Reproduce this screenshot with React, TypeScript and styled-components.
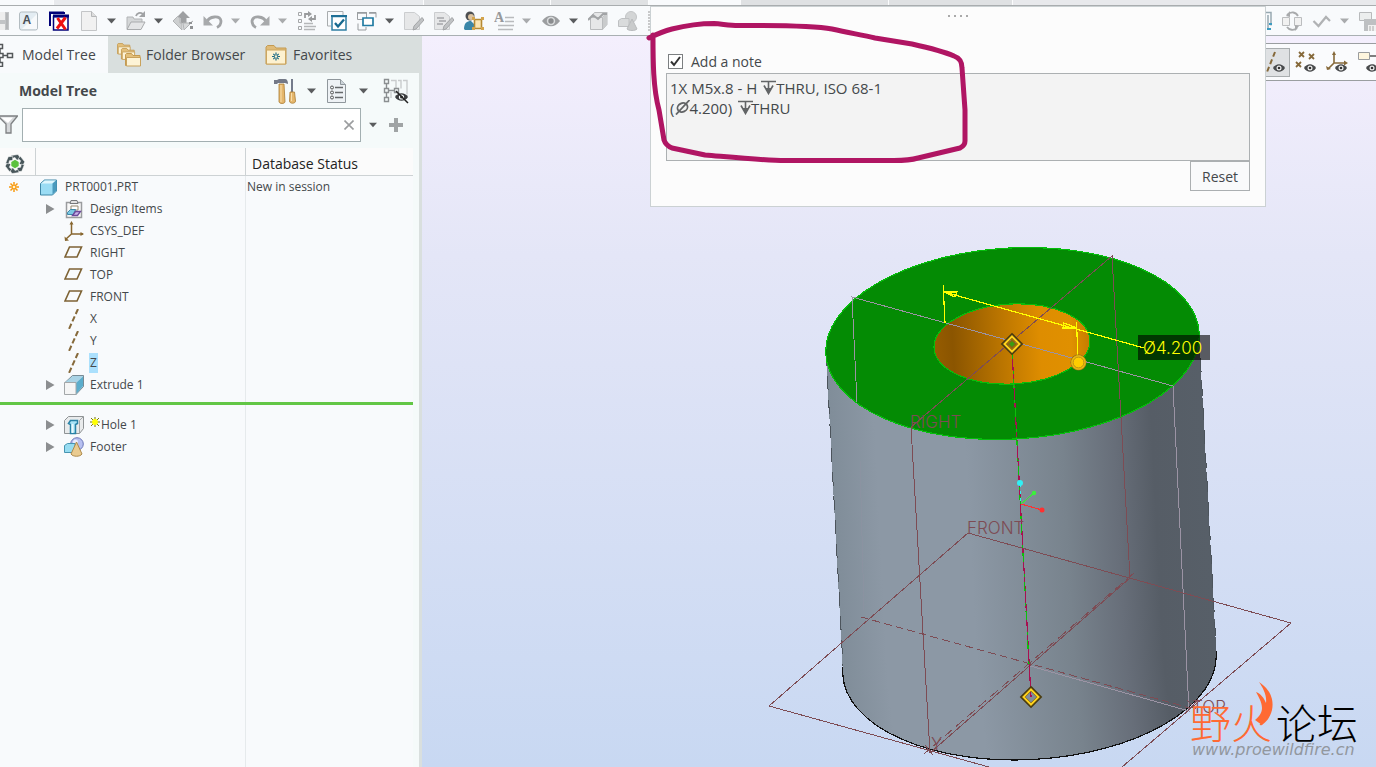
import React from "react";
import styled, { createGlobalStyle } from "styled-components";

const GlobalStyle = createGlobalStyle`
  * { box-sizing: border-box; }
  body { margin: 0; overflow: hidden; font-family: "Open Sans", "Noto Sans", sans-serif; color: #44484b; }
  button, input, textarea { font: inherit; color: inherit; }
`;

/* ---------- page frame ---------- */

const Page = styled.div`
  position: relative;
  display: flex;
  flex-direction: column;
  height: 100vh;
  min-height: 560px;
  overflow: hidden;
`;

const RibbonTabs = styled.div`
  display: flex;
  gap: 1px;
  height: 6px;
  background: #fbfcfd;
  border-bottom: 1px solid #a9adaf;
`;

const RibbonTab = styled.span<{ $w?: number; $tone: string }>`
  flex: ${(p) => (p.$w ? `0 0 ${p.$w}px` : "1")};
  background: ${(p) => p.$tone};
`;

const Toolbar = styled.header`
  display: flex;
  justify-content: space-between;
  align-items: center;
  height: 30px;
  overflow: hidden;
  background: #f8fafc;
  border-bottom: 1px solid #a9b0b2;
`;

const ToolGroup = styled.div<{ $start?: number; $end?: number }>`
  display: flex;
  align-items: center;
  gap: 10px;
  flex: none;
  margin-left: ${(p) => p.$start || 0}px;
  margin-right: ${(p) => p.$end || 0}px;
`;

const Split = styled.span`
  display: flex;
  align-items: center;
  gap: 8px;
`;

const IconButton = styled.button<{ $w?: number; $h?: number }>`
  display: flex;
  align-items: center;
  justify-content: center;
  width: ${(p) => p.$w || 20}px;
  height: ${(p) => p.$h || 20}px;
  padding: 0;
  border: 0;
  background: none;
  flex: none;
`;

const Work = styled.div`
  display: flex;
  flex: 1;
  min-height: 0;
`;

/* ---------- model tree panel ---------- */

const Panel = styled.aside`
  display: flex;
  flex-direction: column;
  width: 422px;
  flex: none;
  background: #d9dfde;
  padding-right: 3px;
`;

const PanelTabs = styled.nav`
  display: flex;
  height: 37px;
`;

const PanelTab = styled.button<{ $active?: boolean; $w: number }>`
  display: flex;
  align-items: center;
  gap: 5px;
  width: ${(p) => p.$w}px;
  padding: 0 0 0 9px;
  border: 0;
  background: ${(p) => (p.$active ? "#f8fafc" : "transparent")};
  font-size: 14px;
  white-space: nowrap;
  overflow: hidden;
`;

const LeadTab = styled(PanelTab)`
  padding-left: 0;
  gap: 8px;
`;

const PanelBody = styled.div`
  display: flex;
  flex-direction: column;
  flex: 1;
  background: #f5fafa;
`;

const PanelHead = styled.div`
  display: flex;
  align-items: center;
  height: 35px;
  padding: 0 10px 0 19px;
  gap: 15px;
`;

const PanelTitle = styled.h2`
  flex: 1;
  margin: 0;
  font-size: 14px;
  font-weight: 700;
`;

const SearchRow = styled.div`
  display: flex;
  align-items: center;
  height: 34px;
  gap: 8px;
  margin-bottom: 6px;
  padding-right: 12px;
`;

const SearchBox = styled.div`
  display: flex;
  align-items: center;
  flex: 1;
  height: 34px;
  margin-left: -4px;
  background: #fff;
  border: 1px solid #a3afb1;
`;

const SearchInput = styled.input`
  flex: 1;
  min-width: 0;
  border: 0;
  outline: 0;
  padding: 0 8px;
  background: transparent;
  font-size: 14px;
`;

const TreeArea = styled.div`
  flex: 1;
  margin-right: 6px;
  background: linear-gradient(#e6eaec, #e6eaec) 245px 0 / 1px 100% no-repeat #f8fafc;
`;

const Tree = styled.table`
  width: 100%;
  table-layout: fixed;
  border-collapse: separate;
  border-spacing: 0;
  font-size: 12px;

  td { height: 22px; padding: 0; line-height: 16px; white-space: nowrap; }
`;

const HeadCell = styled.th<{ $w?: number }>`
  width: ${(p) => (p.$w ? `${p.$w}px` : "auto")};
  height: 28px;
  padding: 4px 0 0 5px;
  background: #fbfbfb;
  border-bottom: 1px solid #cdd2d4;
  border-right: 1px solid #cdd2d4;
  color: #222;
  font-size: 14px;
  font-weight: 400;
  line-height: 20px;
  text-align: left;

  &:last-child { padding-left: 6px; border-right: 0; }
  svg { display: block; }
`;

const StatusCell = styled.td`
  padding-left: 1px !important;
`;

const MarkCell = styled.td`
  padding-left: 9px !important;
  svg { display: block; }
`;

const Node = styled.div<{ $root?: boolean }>`
  display: flex;
  align-items: center;
  gap: ${(p) => (p.$root ? 8 : 5)}px;
  height: 22px;
  padding-left: ${(p) => (p.$root ? 4 : 9)}px;
`;

const Twisty = styled.button`
  width: 10px;
  height: 12px;
  padding: 0;
  margin-right: 4px;
  border: 0;
  background: none;
  flex: none;
  svg { display: block; }
`;

const NoTwisty = styled.span`
  width: 10px;
  margin-right: 4px;
  flex: none;
`;

const NodeLabel = styled.span<{ $selected?: boolean }>`
  display: flex;
  padding: 2px 1px;
  background: ${(p) => (p.$selected ? "#abe0fd" : "transparent")};
`;

const InsertCell = styled.td`
  height: 18px !important;
  padding-top: 6px !important;
  line-height: 1px !important;
  vertical-align: top;
`;

const InsertLine = styled.div`
  height: 3px;
  background: #62c645;
`;

/* ---------- graphics area ---------- */

const Canvas = styled.main`
  position: relative;
  flex: 1;
  min-width: 0;
  background: linear-gradient(#f4effd, #e4e6f7 30%, #c8d8f2);
`;

const Scene = styled.svg`
  display: block;
  width: 100%;
  height: 100%;
`;

const ViewBar = styled.div`
  position: absolute;
  top: 7px;
  right: 0;
  display: flex;
  align-items: center;
  justify-content: flex-end;
  gap: 1px;
  width: 130px;
  height: 38px;
  overflow: hidden;
  background: #fafbfd;
  border-top: 1px solid #9a9ea0;
  border-bottom: 1px solid #9a9ea0;
`;

const ViewButton = styled(IconButton)<{ $on?: boolean }>`
  width: 30px;
  height: 29px;
  background: ${(p) => (p.$on ? "#dfe1e3" : "none")};
  border: 1px solid ${(p) => (p.$on ? "#a9adaf" : "transparent")};
  &:last-child { margin-right: -7px; }
`;

const Watermark = styled.div`
  position: absolute;
  right: 18px;
  bottom: 8px;
  width: 168px;
`;

const BrandName = styled.div`
  display: flex;
  justify-content: space-between;
  font-family: "Noto Sans CJK SC", sans-serif;
  font-size: 41px;
  font-weight: 300;
  line-height: 40px;
  color: #000;
  white-space: nowrap;
`;

const Orange = styled.span`
  color: #ff6a33;
`;

const Site = styled.div`
  padding-left: 2px;
  font-family: "DejaVu Sans", sans-serif;
  font-size: 16px;
  font-style: italic;
  line-height: 18px;
  color: #92979e;
`;

const Flame = styled.svg`
  position: absolute;
  left: 59px;
  top: -20px;
`;

/* ---------- note dialog ---------- */

const Dialog = styled.section`
  position: absolute;
  left: 650px;
  right: 110px;
  top: 6px;
  display: flex;
  flex-direction: column;
  padding: 8px 15px 15px;
  background: #fcfcfc;
  border: 1px solid #cbd1d3;
`;

const Grip = styled.div`
  display: flex;
  justify-content: center;
  gap: 4px;
  height: 34px;

  i { width: 2px; height: 2px; background: #aaa; }
`;

const CheckRow = styled.label`
  display: flex;
  align-items: center;
  gap: 8px;
  height: 24px;
  font-size: 14px;
`;

const Check = styled.input`
  appearance: none;
  width: 15px;
  height: 15px;
  margin: 0 0 0 2px;
  border: 1px solid #7c7f81;
  background: #fff;

  &:checked {
    background: #fff url("data:image/svg+xml,%3Csvg xmlns='http://www.w3.org/2000/svg' viewBox='0 0 13 13'%3E%3Cpath d='M2 6.5 5 10l6-8' fill='none' stroke='%23333' stroke-width='2'/%3E%3C/svg%3E");
  }
`;

const NoteBox = styled.div`
  position: relative;
`;

const NoteText = styled.textarea`
  display: block;
  width: 100%;
  height: 88px;
  padding: 4px 3px;
  border: 1px solid #acb0b2;
  outline: 0;
  resize: none;
  overflow: hidden;
  background: #f3f3f3;
  font-family: "Open Sans", "DejaVu Sans", sans-serif;
  font-size: 15px;
  line-height: 20px;
`;

const NoteSymbol = styled.svg<{ $x: number; $line: number }>`
  position: absolute;
  left: ${(p) => p.$x}px;
  top: ${(p) => 7 + p.$line * 20}px;
  pointer-events: none;
`;

const ResetButton = styled.button`
  align-self: flex-end;
  width: 60px;
  height: 30px;
  padding: 0;
  border: 1px solid #abafb1;
  background: #f9fafb;
  font-size: 14px;
`;

const Marker = styled.svg`
  position: absolute;
  left: 640px;
  top: 16px;
  pointer-events: none;
`;

/* ---------- toolbar drawings ---------- */

const Svg = ({ w = 20, h = 20, children }: { w?: number; h?: number; children: React.ReactNode }) => (
  <svg width={w} height={h} viewBox={`0 0 ${w} ${h}`} fill="none" aria-hidden="true">
    {children}
  </svg>
);

const Caret = ({ dim }: { dim?: boolean }) => (
  <Svg w={9} h={6}>
    <path d="M0 .5h9L4.500 5.500z" fill={dim ? "#a9abad" : "#5a5c5e"} />
  </Svg>
);

const SaveIcon = () => (
  <Svg>
    <path d="M1 1h19v18H1z" fill="#c2c4c6" />
    <path d="M4 1h12v8H4zM5 13h11v6H5z" fill="#eee" />
    <path d="M18 2v16" stroke="#a5a7a9" />
  </Svg>
);

const LetterIcon = () => (
  <Svg>
    <rect x=".5" y="1" width="18" height="18" rx="2" fill="#e3ecf2" stroke="#b3bcc1" />
    <path d="M3 18 18 3v15z" fill="#fff" opacity=".7" />
    <text x="3.500" y="12.500" fontSize="12" fontWeight="700" fontFamily="Liberation Sans, sans-serif" fill="#4a5157">A</text>
  </Svg>
);

const CloseWindowsIcon = () => (
  <Svg>
    <path d="M1 15V1.500h14M0 2h16" stroke="#000078" strokeWidth="2" />
    <path d="M4.500 5.500h14.500V19H4.500z" fill="#fff" stroke="#000078" strokeWidth="1.500" />
    <path d="M4 5h16" stroke="#000078" strokeWidth="3" />
    <path d="M8.500 7l8 11.500M16.500 6.500 8 17.500" stroke="#ee1111" strokeWidth="3" />
  </Svg>
);

const NewIcon = () => (
  <Svg>
    <path d="M2.500.5h10l5 5v14h-15z" fill="#f1f1f1" stroke="#c3c5c7" />
    <path d="M12.500.5v5h5" fill="#ddd" stroke="#b5b7b9" />
  </Svg>
);

const OpenIcon = () => (
  <Svg>
    <path d="M1 18V6h6l1 2h8v3" fill="#d5d7d8" stroke="#b2b4b6" />
    <path d="M1 18.500 5 11h14l-4 7.500z" fill="#e4e5e6" stroke="#a9abad" />
    <path d="M10 5c1-3 4-4 7-2" stroke="#a0a2a4" strokeWidth="1.800" />
    <path d="M19 0v6h-6z" fill="#a0a2a4" />
  </Svg>
);

const MoveIcon = () => (
  <Svg>
    <path d="M10 0l7 7h-3.500v5h-6V7H3z" fill="#9ea0a2" />
    <path d="M4.500 5.500 0 10l9 9v-7H7V7z" fill="#cdcfd0" stroke="#b2b4b6" />
    <path d="M10 12h7l3-2-9 9z" fill="#d6d8d9" stroke="#b2b4b6" />
    <path d="M16 11h3v2h-3zM17 15h3v3h-3z" fill="#8f9193" />
  </Svg>
);

const UndoIcon = ({ flip }: { flip?: boolean }) => (
  <Svg>
    <g transform={flip ? "matrix(-1 0 0 1 20 0)" : undefined}>
      <path d="M4 11c2-6 13-7 14-1 0 3-1 5-4 6.500" stroke="#a2a4a6" strokeWidth="2.800" />
      <path d="M.5 5v9.500H10z" fill="#a8aaac" />
    </g>
  </Svg>
);

const RegenIcon = () => (
  <Svg>
    <path d="M1.500 1.500h3v3h-3zM1.500 8.500h3v3h-3zM1.500 15.500h3v3h-3z" stroke="#a5a7a9" />
    <path d="M7 12.500h9M7 15.500h12M7 18.500h11" stroke="#b5b7b9" strokeWidth="1.500" />
    <path d="M8 7V3h4M18 4v4h-4" stroke="#999b9d" strokeWidth="1.800" />
    <path d="M11 0l4 3-4 3zM15 5v6l-4-3z" fill="#999b9d" />
  </Svg>
);

const CheckWindowIcon = () => (
  <Svg>
    <path d="M4 15H.5V.5H16V4" stroke="#a8acae" />
    <path d="M5 5.500h14V19H5z" fill="#fff" stroke="#2f7fa3" strokeWidth="1.500" />
    <path d="M4 5h16" stroke="#1d6f96" strokeWidth="2" />
    <path d="M8 12l3 3.500 6-7" stroke="#17698f" strokeWidth="2.300" />
  </Svg>
);

const WindowsIcon = () => (
  <Svg>
    <path d="M.5 1.500h9v7h-9zM12.500 1.500H19v5M1 12.500V19h8v-3" stroke="#999da0" />
    <path d="M0 2h10M12 2h7" stroke="#999da0" strokeWidth="1.500" />
    <path d="M6 7h10v7.500H6z" fill="#fff" stroke="#237ca3" strokeWidth="1.700" />
  </Svg>
);

const EditDocIcon = ({ lines }: { lines?: boolean }) => (
  <Svg>
    <path d="M.5 1.500h10l5 4v13H.5z" fill="#e6e7e8" stroke="#cbcdcf" />
    {lines && <path d="M3 7h7M5 10h7M3 13h6" stroke="#a5a7a9" strokeWidth="1.500" />}
    <path d="M10 15l8-8.500 2 2.500-8 9-3 1z" fill="#c0c2c4" stroke="#a3a5a7" />
  </Svg>
);

const PersonIcon = () => (
  <Svg>
    <circle cx="6" cy="5" r="4.500" fill="#4d4f52" />
    <circle cx="7" cy="6" r="3" fill="#dcc3a0" />
    <path d="M0 18c0-6 3-8 7-8l3 3v6H1z" fill="#3a86a8" />
    <path d="M10.500 8.500h7v9h-7z" fill="#fbe6b4" stroke="#b58a35" strokeWidth="1.600" />
    <path d="M8 6h3v3H8zM17 6h3v3h-3zM8 16h3v3H8zM17 16h3v3h-3z" fill="#d3a44c" />
  </Svg>
);

const TextStyleIcon = () => (
  <Svg>
    <text x="0" y="11" fontSize="14" fontWeight="700" fontFamily="Liberation Serif, serif" fill="#97999b">A</text>
    <path d="M11 6.500h9M11 10.500h9M4 14.500h16M4 18.500h15" stroke="#b9bbbd" strokeWidth="1.500" />
  </Svg>
);

const EyeIcon = () => (
  <Svg>
    <path d="M1 10c5-7 13-7 18 0-5 7-13 7-18 0z" fill="#9c9ea0" />
    <circle cx="10" cy="10" r="4.200" fill="#d9dbdc" />
    <circle cx="10" cy="10" r="2.700" fill="#8a8c8e" />
  </Svg>
);

const CubeIcon = () => (
  <Svg>
    <path d="M2.500 6.500h12v12h-12zM2.500 6.500l4-5H19l-4.500 5M19 1.500v12l-4.500 5" fill="#e6e7e8" stroke="#b9bbbd" />
    <path d="M15 6.500 19 1.500v12l-4 5z" fill="#c9cbcc" />
    <path d="M0 9 5 4l5 4 5-5h4" stroke="#a2a4a6" strokeWidth="2" />
  </Svg>
);

const ShapesIcon = () => (
  <Svg>
    <circle cx="13" cy="6" r="5.500" fill="#d3d5d6" stroke="#c3c5c7" />
    <path d="M.5 9.500l3-2H11v8H.5z" fill="#d9dbdc" stroke="#bec0c2" />
    <path d="M14 8l5 10c-2 2-8 2-10 0z" fill="#c9cbcc" stroke="#b9bbbd" />
  </Svg>
);

const DotsIcon = () => (
  <Svg w={2}>
    <path d="M1 0v20" stroke="#999" strokeDasharray="2 1" />
  </Svg>
);

const SheetsIcon = () => (
  <Svg>
    <path d="M12 1.500h7v13M16 4v14" stroke="#98a9b1" strokeWidth="1.500" />
    <path d="M17 13h3M15 18h4" stroke="#3c9bc0" strokeWidth="2" />
  </Svg>
);

const RefreshIcon = () => (
  <Svg>
    <path d="M.5 6.500h7v8h-7zM12.500 6.500h7v8h-7z" fill="#f1f1f1" stroke="#bbbdbf" />
    <path d="M5 4c4-4 9-3 11 1M15 17c-3 3-8 2-10-1" stroke="#a8aaac" strokeWidth="1.800" />
    <path d="M8 0v6L4 5zM13 20v-6l4 1z" fill="#a8aaac" />
  </Svg>
);

const CheckIcon = () => (
  <Svg>
    <path d="M1.500 10l5 5L14 6l4 4" stroke="#b0b2b4" strokeWidth="2.200" />
  </Svg>
);

const DiskBoxIcon = () => (
  <Svg>
    <path d="M.5 1.500h12v8H.5z" fill="#eceeee" stroke="#b8babc" />
    <path d="M5 8h15v12H5z" fill="#bec0c2" />
    <path d="M9 14h9v6H9z" fill="#f1f1f1" />
    <path d="M11 15v5M14 15v5" stroke="#aaa" />
  </Svg>
);

/* ---------- panel drawings ---------- */

const TreeGlyph = () => (
  <Svg w={14} h={24}>
    <path d="M-1 1.500h3.500v4H-1M-1 10.500h4v4h-4M7.500 10.500h5v4h-5zM-1 19.500h3.500v4H-1M3 12.500h4M0 6v4M0 15v4" stroke="#54585a" strokeWidth="1.500" />
  </Svg>
);

const Folder = ({ x, y, s = 1 }: { x: number; y: number; s?: number }) => (
  <g transform={`translate(${x} ${y}) scale(${s})`}>
    <path d="M.5 12.500v-11l1-1h5l1.500 2h7v10z" fill="#e3bf7b" stroke="#c49a51" />
    <path d="M1.500 4.500h14v8.500h-14z" fill="#fdf3d6" stroke="#c9a25c" />
  </g>
);

const FoldersIcon = () => (
  <Svg w={24} h={24}>
    <Folder x={0} y={0} s={0.85} />
    <Folder x={4} y={5} s={0.88} />
    <Folder x={8} y={10} />
  </Svg>
);

const FavoritesIcon = () => (
  <Svg w={24} h={20}>
    <path d="M2 19V2l1.500-1.500H10L12 3h10v16z" fill="#e0bc79" stroke="#c49a51" />
    <path d="M2.500 5h19v14h-19z" fill="#fdf1d0" stroke="#cda65f" />
    <path d="M12 7.500v8M8 11.500h8M9.300 8.800l5.400 5.400M14.700 8.800l-5.400 5.400" stroke="#1d6b85" strokeWidth="1.200" />
    <circle cx="12" cy="11.500" r="1.200" fill="#fdf1d0" />
  </Svg>
);

const ToolsIcon = () => (
  <Svg w={22} h={26}>
    <path d="M0 2h3l2-1h6c2 0 3 2 3 5l-3-1H4L3 6H0z" fill="#737987" />
    <path d="M5 6h5l1 18c-1 2-5 2-6 0z" fill="#e5b76c" stroke="#aa7b34" strokeWidth=".8" />
    <path d="M18 1v13" stroke="#747b8b" strokeWidth="2" />
    <path d="M16 14h4.500l1 9c0 3-6 3-6 0z" fill="#e5b76c" stroke="#aa7b34" strokeWidth=".8" />
    <path d="M7 7v17M17.500 15v8" stroke="#f8deac" />
  </Svg>
);

const ListIcon = () => (
  <Svg w={22} h={26}>
    <path d="M1.500 1.500h13l5 5v18h-18z" fill="#eef2f5" stroke="#8f979c" />
    <path d="M14.500 1.500v5h5" fill="#ccd4d9" stroke="#8f979c" />
    <circle cx="6" cy="9.500" r="1.500" stroke="#555" />
    <circle cx="6" cy="14.500" r="1.500" stroke="#555" />
    <circle cx="6" cy="19.500" r="1.500" stroke="#555" />
    <path d="M9 9.500h8M9 14.500h8M9 19.500h8" stroke="#66696b" strokeWidth="1.500" />
  </Svg>
);

const HideTreeIcon = () => (
  <Svg w={26} h={26}>
    <path d="M8 2.500h5v8M15 2.500h3v8M20 2.500h4v14M8 14v6" stroke="#c9cccd" strokeWidth="1.400" />
    <path d="M1.500 1.500h4v4h-4zM1.500 10.500h4v4h-4zM1.500 19.500h4v4h-4zM11.500 10.500h4v4h-4zM3.500 6v4M3.500 15v4M6 12.500h5" stroke="#8b8f91" strokeWidth="1.400" />
    <path d="M12 19c3-5 10-5 13 0-3 5-10 5-13 0z" fill="#3b3d3f" />
    <circle cx="18.500" cy="19" r="2.600" fill="#f5fafa" />
    <circle cx="18.500" cy="19" r="1.500" fill="#333" />
    <path d="M13 13l12 12" stroke="#222" strokeWidth="1.500" />
  </Svg>
);

const FunnelIcon = () => (
  <Svg w={18} h={20}>
    <path d="M-2 1h19.500L11 9v9H6V9z" fill="#d5d8da" stroke="#7d8082" strokeWidth="1.300" />
    <path d="M1 2.500h12L8 8z" fill="#fff" />
  </Svg>
);

const ClearIcon = () => (
  <Svg w={10} h={10}>
    <path d="M.5.5l9 9M9.500.5l-9 9" stroke="#9b9d9f" strokeWidth="1.600" />
  </Svg>
);

const PlusIcon = () => (
  <Svg w={14} h={14}>
    <path d="M7 0v14M0 7h14" stroke="#a0a4a5" strokeWidth="4" />
  </Svg>
);

const GearIcon = () => (
  <Svg w={20} h={20}>
    {[0, 60, 120, 180, 240, 300].map((a) => (
      <path key={a} transform={`rotate(${a} 10 10)`} d="M6 1.500 13 .500l2.500 3.700-3.500 2L10 3.500 7 4.500z" fill="#48565a" stroke="#fbfbfb" strokeWidth=".5" />
    ))}
    <path d="M10 5.800l3.700 2.100v4.200L10 14.200l-3.700-2.100V7.900z" fill="#5cc13d" />
  </Svg>
);

const StarIcon = () => (
  <Svg w={10} h={10}>
    <path d="M5 0v10M0 5h10M1.500 1.500l7 7M8.500 1.500l-7 7" stroke="#f79a10" strokeWidth="1.500" />
    <circle cx="5" cy="5" r="1.300" fill="#fff3cf" />
  </Svg>
);

const NewFlag = () => (
  <Svg w={11} h={10}>
    <path d="M5 0v10M0 5h10M1 1l8 8M9 1 1 9" stroke="#77770a" />
    <circle cx="5" cy="5" r="2.900" fill="#ffff00" />
  </Svg>
);

const TwistyIcon = () => (
  <Svg w={10} h={12}>
    <path d="M1 1l8.500 5L1 11z" fill="#8c8e90" />
  </Svg>
);

const PartIcon = () => (
  <Svg w={17} h={17}>
    <path d="M.5 4.500l4-3.500h12v11l-4 4H.5z" fill="#9adcf4" stroke="#3f87a6" />
    <path d="M1 4.500 5 1.500h11l-3.500 3z" fill="#dff6fd" />
    <path d="M12.500 4.500v11l4-4V1z" fill="#4a9abd" />
  </Svg>
);

const DesignIcon = () => (
  <Svg>
    <path d="M2.500 3.500h15v15h-15z" fill="#f8f8f8" stroke="#9a9c9e" strokeWidth="1.500" />
    <path d="M7 1.500h6l1 3H6z" fill="#e2e2e2" stroke="#77797b" />
    <path d="M7 7h7v4H7z" fill="#fff" stroke="#968a72" />
    <path d="M3.500 13.500l3-3h5l-2 5h-6z" fill="#7cc8e4" stroke="#3c88a8" />
    <path d="M8.500 16.500l3-4h5l-3 4z" fill="#c9b2e8" stroke="#6d4a9c" strokeWidth="1.300" />
  </Svg>
);

const CsysIcon = () => (
  <Svg>
    <path d="M7.500 2v11H19M7.500 13 2 18" stroke="#87662f" strokeWidth="1.500" />
    <path d="M5.500 3.500 7.500 0l2 3.500zM16.500 11l3.500 2-3.500 2zM.5 15.500 1 20l4-.5z" fill="#87662f" />
  </Svg>
);

const PlaneIcon = () => (
  <Svg>
    <path d="M5.500 4h12l-4.500 10H1z" stroke="#7d6234" strokeWidth="1.600" />
  </Svg>
);

const AxisIcon = () => (
  <Svg>
    <path d="M14 0 5 20" stroke="#86693a" strokeWidth="2" strokeDasharray="5.500 2.600" />
  </Svg>
);

const ExtrudeIcon = () => (
  <Svg>
    <path d="M.5 8l8-7.500h11v11L12 19.500z" fill="#b9dcec" stroke="#60727c" strokeWidth=".8" />
    <path d="M1 7.500 9 1h10l-7 6.500z" fill="#a9d3e5" />
    <path d="M12 8l7-6.500V11l-7 8z" fill="#5badcc" />
    <path d="M.5 7.500H12v12H.5z" fill="#f5f5f5" stroke="#a3a7a9" />
  </Svg>
);

const HoleIcon = () => (
  <Svg>
    <path d="M.5 5.500l4-4h15v12l-4 5H.5z" fill="#e9ebec" stroke="#8f9395" />
    <path d="M15.500 5.500l4-4M15.500 5.500v13" stroke="#a5a9ab" />
    <path d="M4.500 8.500l2-3h7v3l-2 1v9h-5v-9z" fill="#a9e3f6" stroke="#2882a6" strokeWidth="1.500" />
    <path d="M8.500 9v9" stroke="#e9f8fd" strokeWidth="2" />
  </Svg>
);

const FooterIcon = () => (
  <Svg>
    <circle cx="13" cy="7" r="6.300" fill="#b6bff0" stroke="#6b76b8" />
    <circle cx="11.500" cy="5" r="2.500" fill="#e9ecfd" />
    <path d="M.5 8.500l3-2H11v9H.5z" fill="#97dcf1" stroke="#4794b1" />
    <path d="M12.500 5 18 17c-2 3-9 3-11 0z" fill="#eacb90" stroke="#ad8a4c" />
  </Svg>
);

/* ---------- view toolbar drawings ---------- */

const SmallEye = () => (
  <>
    <path d="M9 17c3-5 9-5 12 0-3 5-9 5-12 0z" fill="#47494b" />
    <circle cx="15" cy="17" r="2.500" fill="#f0f0f0" />
    <circle cx="15" cy="17" r="1.300" fill="#333" />
  </>
);

const AxisViewIcon = () => (
  <Svg w={22} h={22}>
    <path d="M11 1 3 21" stroke="#86693a" strokeWidth="2" strokeDasharray="5 3" />
    <SmallEye />
  </Svg>
);

const PointsViewIcon = () => (
  <Svg w={22} h={22}>
    <path d="M4 1l5 5M9 1 4 6M14 3l5 5M19 3l-5 5M1 11l5 5M6 11l-5 5" stroke="#86693a" strokeWidth="1.800" />
    <SmallEye />
  </Svg>
);

const CsysViewIcon = () => (
  <Svg w={22} h={22}>
    <path d="M8 2v10h12M8 12l-6 6" stroke="#86693a" strokeWidth="1.600" />
    <path d="M6 4l2-4 2 4zM18 9.500l4 2.500-4 2.500zM0 15l1 4 4-1z" fill="#86693a" />
    <SmallEye />
  </Svg>
);

const NotesViewIcon = () => (
  <Svg w={22} h={22}>
    <path d="M1.500 1.500h11v7h-11z" fill="#fff6de" stroke="#9a9c9e" />
    <path d="M13 5h9" stroke="#555" strokeWidth="1.500" />
    <SmallEye />
  </Svg>
);

/* ---------- data ---------- */

type Item = { name: string; icon: React.ReactNode; open?: boolean; selected?: boolean; fresh?: boolean };

const ITEMS: Item[] = [
  { name: "Design Items", icon: <DesignIcon />, open: true },
  { name: "CSYS_DEF", icon: <CsysIcon /> },
  { name: "RIGHT", icon: <PlaneIcon /> },
  { name: "TOP", icon: <PlaneIcon /> },
  { name: "FRONT", icon: <PlaneIcon /> },
  { name: "X", icon: <AxisIcon /> },
  { name: "Y", icon: <AxisIcon /> },
  { name: "Z", icon: <AxisIcon />, selected: true },
  { name: "Extrude 1", icon: <ExtrudeIcon />, open: true },
];

const LATER: Item[] = [
  { name: "Hole 1", icon: <HoleIcon />, open: true, fresh: true },
  { name: "Footer", icon: <FooterIcon />, open: true },
];

/* an em space keeps the place of each drafting symbol, which is drawn over it */
const NOTE = "1X M5x.8 - H \u2003THRU, ISO 68-1\n(\u20034.200) \u2003THRU";

const DepthSymbol = ({ x, line }: { x: number; line: number }) => (
  <NoteSymbol $x={x} $line={line} width="15" height="15" viewBox="0 0 15 15" fill="none" stroke="#626466" strokeWidth="1.600" role="img" aria-label="Depth">
    <path d="M0 1.500h15M7.500 1.500v12M3 5.500l4.500 8 4.500-8" />
    <path d="M4.500 8h6l-3 6z" fill="#626466" stroke="none" />
  </NoteSymbol>
);

const DiameterSymbol = ({ x, line }: { x: number; line: number }) => (
  <NoteSymbol $x={x} $line={line} width="15" height="15" viewBox="0 0 15 15" fill="none" stroke="#626466" strokeWidth="1.800" role="img" aria-label="Diameter">
    <ellipse cx="7.500" cy="7.500" rx="5.200" ry="4.300" transform="rotate(-25 7.500 7.500)" />
    <path d="M1 14.500 14.500 0" />
  </NoteSymbol>
);

const RIBBON: [number, string][] = [
  [53, "#f8fafc"],
  [369, "#e8eaed"],
  [126, "#dfe1e3"],
  [97, "#dfe1e3"],
  [91, "#f8fafc"],
  [147, "#dfe1e3"],
  [123, "#dfe1e3"],
];

const Row = ({ item }: { item: Item }) => (
  <tr>
    <td />
    <td>
      <Node>
        {item.open ? (
          <Twisty aria-label={`Expand ${item.name}`}>
            <TwistyIcon />
          </Twisty>
        ) : (
          <NoTwisty />
        )}
        {item.icon}
        <NodeLabel $selected={item.selected}>
          {item.fresh && <NewFlag />}
          {item.name}
        </NodeLabel>
      </Node>
    </td>
    <StatusCell />
  </tr>
);

const Tool = ({ label, children }: { label: string; children: React.ReactNode }) => (
  <IconButton aria-label={label}>{children}</IconButton>
);

const ToolMenu = ({ label, dim, children }: { label: string; dim?: boolean; children: React.ReactNode }) => (
  <Split>
    <IconButton aria-label={label}>{children}</IconButton>
    <IconButton $w={9} aria-label={`${label} options`}>
      <Caret dim={dim} />
    </IconButton>
  </Split>
);

const Handle = ({ x, y, hollow }: { x: number; y: number; hollow?: boolean }) => (
  <g transform={`translate(${x} ${y})`}>
    <path d="M0-8.500 8.500 0 0 8.500-8.500 0z" fill="none" stroke="#4b3d10" strokeWidth="4" />
    <path d="M0-7.500 7.500 0 0 7.500-7.500 0z" fill="none" stroke="#ffd21c" strokeWidth="2" />
    {!hollow && <path d="M0-4 4 0 0 4-4 0z" fill="#3d9c10" stroke="#8a6414" strokeWidth="1.500" />}
  </g>
);

const ModelScene = () => (
  <Scene viewBox="422 36 954 731" preserveAspectRatio="xMidYMin meet" role="img" aria-label="Cylinder with a through hole">
    <defs>
      <linearGradient id="side" gradientUnits="userSpaceOnUse" x1="826" y1="350" x2="1199" y2="331">
        <stop offset="0" stopColor="#808d99" />
        <stop offset=".12" stopColor="#8c98a5" />
        <stop offset=".36" stopColor="#8c98a5" />
        <stop offset=".62" stopColor="#78838d" />
        <stop offset=".76" stopColor="#676e79" />
        <stop offset=".86" stopColor="#565d66" />
        <stop offset="1" stopColor="#575f68" />
      </linearGradient>
      <linearGradient id="bore" gradientUnits="userSpaceOnUse" x1="934" y1="0" x2="1090" y2="0">
        <stop offset="0" stopColor="#965c00" />
        <stop offset=".12" stopColor="#8b5500" />
        <stop offset=".42" stopColor="#b97400" />
        <stop offset=".68" stopColor="#de8d00" />
        <stop offset=".88" stopColor="#e09000" />
        <stop offset="1" stopColor="#c57c00" />
      </linearGradient>
    </defs>

    <g shapeRendering="crispEdges">
      <ellipse cx="1029.500" cy="664" rx="187" ry="95.500" transform="rotate(-3.300 1029.500 664)" fill="url(#side)" stroke="#111" strokeWidth="1.200" />
      <path d="M826 352 843 674 1216.500 655 1199 334z" fill="url(#side)" />
      <path d="M826 352 843 666M1199 334l17 312" stroke="#4c545c" strokeDasharray="14 10" />
      <ellipse cx="1012.500" cy="343.500" rx="187" ry="95.500" transform="rotate(-3.300 1012.500 343.500)" fill="#048b04" stroke="#06bd0c" strokeWidth="1.200" />
      <ellipse cx="1012" cy="344" rx="78" ry="40" transform="rotate(-3 1012 344)" fill="url(#bore)" stroke="#0abb0a" strokeWidth="1.200" />

      <g fill="none" stroke="#9b93a4">
        <path d="M857 402 852 297 1173 386 1189 711 1030 666" />
        <path d="M860 460l4 150" opacity=".2" />
      </g>
      <g fill="none" stroke="#7d4c54">
        <path d="M911 427 1112 256 1130 578 930 753z" />
        <path d="M1122 767 1291 623 968 533 769 706 989 767" />
        <path d="M861 617 1190 708" strokeDasharray="8 4" />
        <path d="M1134 573 924 754" strokeDasharray="10 5" />
        <path d="M1106 261l6-5v8M925 745l8 10M1187 700l9 9M1187 712l11-13" />
      </g>

      <path d="M1012 350 1031 697" stroke="#a80f50" strokeWidth="1.200" />
      <path d="M1012 350 1029 665" stroke="#0cc00c" strokeWidth="1.200" strokeDasharray="9 12 3 5" />
      <path d="M1021 504l13-11" stroke="#3be83b" />
      <path d="M1021 504l21 6" stroke="#ff3030" />
      <path d="M1020 484l1 20" stroke="#30f0f0" strokeDasharray="3 4" />
      <rect x="1138" y="335" width="72" height="25" fill="#000" opacity=".6" />
      <path d="M943.500 285v7l1.500 31M944 292l200 56M1076.500 322l1.500 36M944 292h13l-2 5zM1077 328l-13-5-1 5z" fill="none" stroke="#ffff00" strokeWidth="1.200" />
    </g>

    <g fontFamily="Inter, sans-serif" fontSize="17" fontWeight="300" fill="#7d4c54">
      <text x="910" y="428">RIGHT</text>
      <text x="967" y="534">FRONT</text>
      <text x="1192" y="713">TOP</text>
      <text x="931" y="750">Y</text>
      <text x="1143" y="354" fill="#ffff00">Ø4.200</text>
    </g>

    <circle cx="1020" cy="483" r="3" fill="#30f0f5" />
    <circle cx="1034" cy="493" r="2.200" fill="#3bf03b" />
    <circle cx="1042" cy="510" r="2.500" fill="#ff3030" />
    <circle cx="1078.500" cy="362.500" r="8" fill="#8a6a18" />
    <circle cx="1078.500" cy="362.500" r="7" fill="#ffcf0a" stroke="#e3ae16" />
    <circle cx="1078.500" cy="362.500" r="5.500" fill="#ffcc00" stroke="#b0861a" />
    <Handle x={1012} y={344} />
    <Handle x={1031} y={697} hollow />
  </Scene>
);

export default function App() {
  return (
    <Page>
      <GlobalStyle />
      <RibbonTabs>
        {RIBBON.map(([w, tone], i) => (
          <RibbonTab key={i} $w={w} $tone={tone} />
        ))}
        <RibbonTab $tone="#e8e9ec" />
      </RibbonTabs>

      <Toolbar>
        <ToolGroup $start={-11}>
          <Tool label="Save"><SaveIcon /></Tool>
          <Tool label="Annotation"><LetterIcon /></Tool>
          <Tool label="Close windows"><CloseWindowsIcon /></Tool>
          <ToolMenu label="New"><NewIcon /></ToolMenu>
          <ToolMenu label="Open"><OpenIcon /></ToolMenu>
          <Tool label="Move"><MoveIcon /></Tool>
          <ToolMenu label="Undo" dim><UndoIcon /></ToolMenu>
          <ToolMenu label="Redo" dim><UndoIcon flip /></ToolMenu>
          <Tool label="Regenerate"><RegenIcon /></Tool>
          <Tool label="Activate"><CheckWindowIcon /></Tool>
          <ToolMenu label="Windows"><WindowsIcon /></ToolMenu>
          <Tool label="Edit"><EditDocIcon /></Tool>
          <Tool label="Edit definition"><EditDocIcon lines /></Tool>
          <Tool label="User components"><PersonIcon /></Tool>
          <ToolMenu label="Text style" dim><TextStyleIcon /></ToolMenu>
          <ToolMenu label="Visibility"><EyeIcon /></ToolMenu>
          <Tool label="Surface"><CubeIcon /></Tool>
          <Tool label="Shapes"><ShapesIcon /></Tool>
          <DotsIcon />
        </ToolGroup>
        <ToolGroup $end={-3}>
          <Tool label="Sheets"><SheetsIcon /></Tool>
          <Tool label="Refresh"><RefreshIcon /></Tool>
          <ToolMenu label="Verify" dim><CheckIcon /></ToolMenu>
          <Tool label="Save view"><DiskBoxIcon /></Tool>
        </ToolGroup>
      </Toolbar>

      <Work>
        <Panel>
          <PanelTabs>
            <LeadTab $active $w={108}><TreeGlyph />Model Tree</LeadTab>
            <PanelTab $w={147}><FoldersIcon />Folder Browser</PanelTab>
            <PanelTab $w={130}><FavoritesIcon />Favorites</PanelTab>
          </PanelTabs>
          <PanelBody>
            <PanelHead>
              <PanelTitle>Model Tree</PanelTitle>
              <ToolGroup>
                <IconButton $w={22} $h={26} aria-label="Tree settings"><ToolsIcon /></IconButton>
                <IconButton $w={10} aria-label="Tree settings options"><Caret /></IconButton>
                <IconButton $w={22} $h={26} aria-label="Show list"><ListIcon /></IconButton>
                <IconButton $w={10} aria-label="Show list options"><Caret /></IconButton>
              </ToolGroup>
              <IconButton $w={26} $h={26} aria-label="Hide tree columns"><HideTreeIcon /></IconButton>
            </PanelHead>
            <SearchRow>
              <FunnelIcon />
              <SearchBox>
                <SearchInput aria-label="Filter tree" />
                <IconButton $w={22} aria-label="Clear filter"><ClearIcon /></IconButton>
              </SearchBox>
              <IconButton $w={8} aria-label="Filter options"><Caret /></IconButton>
              <IconButton $w={22} aria-label="Add filter"><PlusIcon /></IconButton>
            </SearchRow>
            <TreeArea>
              <Tree>
                <thead>
                  <tr>
                    <HeadCell $w={36} aria-label="State"><GearIcon /></HeadCell>
                    <HeadCell $w={210} aria-label="Name" />
                    <HeadCell>Database Status</HeadCell>
                  </tr>
                </thead>
                <tbody>
                  <tr>
                    <MarkCell><StarIcon /></MarkCell>
                    <td>
                      <Node $root><PartIcon />PRT0001.PRT</Node>
                    </td>
                    <StatusCell>New in session</StatusCell>
                  </tr>
                  {ITEMS.map((item) => <Row key={item.name} item={item} />)}
                  <tr>
                    <InsertCell colSpan={3}><InsertLine /></InsertCell>
                  </tr>
                  {LATER.map((item) => <Row key={item.name} item={item} />)}
                </tbody>
              </Tree>
            </TreeArea>
          </PanelBody>
        </Panel>

        <Canvas>
          <ModelScene />
          <ViewBar>
            <ViewButton $on aria-label="Show axes"><AxisViewIcon /></ViewButton>
            <ViewButton aria-label="Show points"><PointsViewIcon /></ViewButton>
            <ViewButton aria-label="Show coordinate systems"><CsysViewIcon /></ViewButton>
            <ViewButton aria-label="Show annotations"><NotesViewIcon /></ViewButton>
          </ViewBar>
          <Watermark>
            <BrandName><Orange>野火</Orange><span>论坛</span></BrandName>
            <Flame width="36" height="46" viewBox="0 0 36 46">
              <path d="M10 1C22 9 25 19 23 29 21 37 17 41 13 44L6 39C11 35 13 31 13 27 13 21 9 15 7 11 12 13 15 17 17 22 18 14 14 7 10 1z" fill="#ff6a33" />
            </Flame>
            <Site>www.proewildfire.cn</Site>
          </Watermark>
        </Canvas>
      </Work>

      <Dialog aria-label="Note">
        <Grip><i /><i /><i /><i /></Grip>
        <CheckRow>
          <Check type="checkbox" defaultChecked />
          Add a note
        </CheckRow>
        <NoteBox>
          <NoteText aria-label="Note text" defaultValue={NOTE} spellCheck={false} />
          <DepthSymbol x={95} line={0} />
          <DiameterSymbol x={9} line={1} />
          <DepthSymbol x={72} line={1} />
        </NoteBox>
        <ResetButton>Reset</ResetButton>
      </Dialog>

      <Marker width="336" height="155" viewBox="640 16 336 155" fill="none" aria-hidden="true">
        <path
          d="M649 38C657 34 664 31 672 29 688 25 700 23.500 714 23.500 722 24 730 25.500 738 25.500 770 25.500 810 25 832 29 850 33 862 35 875 38L912 44C930 48 945 52 954 56 960 58 962 62 962 68L965 110V141C965 144 964 146 960 148L918 158C908 161 895 160.500 890 160.500H785C765 160.500 740 158 705 155L672 148C667 146 665 143 664 140L659 110C653 88 653 60 653 35"
          stroke="#b01563"
          strokeWidth="5"
          strokeLinecap="round"
          strokeLinejoin="round"
        />
      </Marker>
    </Page>
  );
}
